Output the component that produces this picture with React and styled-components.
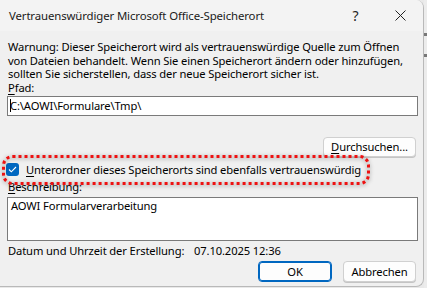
import React from "react";
import styled, { createGlobalStyle } from "styled-components";

const Global = createGlobalStyle`
  html, body { margin: 0; padding: 0; background: #e9e9e9; }
  body { font-family: "Noto Sans", "Open Sans", sans-serif; font-size: 11.2px; letter-spacing: -0.12px; color: #000; }
`;

const Page = styled.div`
  display: flex;
  width: 427px;
  height: 288px;
  overflow: hidden;
`;

const Dialog = styled.div`
  width: 423px;
  height: 286px;
  background: #f0f0f0;
  border-right: 1px solid #b9b9b9;
  border-bottom: 1px solid #b9b9b9;
  border-radius: 0 8px 8px 0;
  display: flex;
  flex-direction: column;
  overflow: hidden;
`;

const Side = styled.div`
  flex: 1;
  background: #ececec;
  display: flex;
  flex-direction: column;
  gap: 18px;
  padding-top: 33px;
`;

const Tick = styled.div`
  width: 3px;
  height: 3px;
  background: #777;
`;

const TitleBar = styled.div`
  height: 31px;
  display: flex;
  align-items: center;
  padding-left: 9px;
  background: #f3f3f3;
`;

const Title = styled.div`
  flex: 1;
  font-size: 11.4px;
  color: #1a1a1a;
`;

const TitleButton = styled.div`
  width: 45px;
  height: 31px;
  display: flex;
  align-items: center;
  justify-content: center;
  font-size: 14px;
  color: #222;
`;

const Body = styled.div`
  flex: 1;
  display: flex;
  flex-direction: column;
  padding: 9px 7px 0 8px;
`;

const Warning = styled.p`
  margin: 0;
  line-height: 13.5px;
  width: 408px;
`;

const Label = styled.div`
  line-height: 14px;
  margin-top: ${(p) => p.$mt || 0}px;
`;

const Input = styled.div`
  margin: 1px -2px 0 -1px;
  height: 18px;
  border: 1px solid #7a7a7a;
  background: #fff;
  display: flex;
  align-items: center;
  padding-left: 2px;
`;

const Caret = styled.span`
  width: 1px;
  height: 13px;
  background: #000;
  margin-right: -1px;
`;

const Area = styled.div`
  margin: 3px -2px 0 -1px;
  height: 41px;
  border: 1px solid #7a7a7a;
  background: #fff;
  padding: 1px 0 0 3px;
  line-height: 14px;
`;

const Row = styled.div`
  display: flex;
  justify-content: flex-end;
  gap: 11px;
  margin-top: ${(p) => p.$mt || 0}px;
`;

const Button = styled.div`
  width: ${(p) => p.$w}px;
  height: ${(p) => p.$h || 20}px;
  box-sizing: border-box;
  border: 1px solid ${(p) => (p.$primary ? "#0067c0" : "#d0d0d0")};
  box-shadow: ${(p) => (p.$primary ? "inset 0 0 0 1px #0067c0" : "0 1px 0 #c4c4c4")};
  border-radius: 4px;
  background: #fdfdfd;
  display: flex;
  align-items: center;
  justify-content: center;
`;

const CheckRow = styled.div`
  position: relative;
  display: flex;
  align-items: center;
  gap: 7px;
  margin-top: 6px;
  height: 14px;
  margin-left: -2px;
`;

const Box = styled.div`
  width: 13px;
  height: 13px;
  border-radius: 3px;
  background: #0067c0;
  display: flex;
  align-items: center;
  justify-content: center;
`;

const Annotation = styled.svg`
  position: absolute;
  left: -4px;
  top: -8px;
  overflow: visible;
  filter: drop-shadow(0 1px 2px rgba(0, 0, 0, 0.45));
`;

const DateRow = styled.div`
  display: flex;
  margin-top: 3px;
  line-height: 14px;
`;

const DateLabel = styled.span`
  width: 186px;
`;

const Key = styled.u`
  text-decoration: underline;
  text-underline-offset: 2px;
`;

export default function App() {
  return (
    <>
      <Global />
      <Page>
        <Dialog>
          <TitleBar>
            <Title>Vertrauenswürdiger Microsoft Office-Speicherort</Title>
            <TitleButton>?</TitleButton>
            <TitleButton>
              <svg width="11" height="11" viewBox="0 0 11 11">
                <path d="M0.5 0.5 L10.5 10.5 M10.5 0.5 L0.5 10.5" stroke="#222" strokeWidth="1" />
              </svg>
            </TitleButton>
          </TitleBar>
          <Body>
            <Warning>
              Warnung: Dieser Speicherort wird als vertrauenswürdige Quelle zum Öffnen von Dateien behandelt. Wenn Sie einen Speicherort ändern oder hinzufügen, sollten Sie sicherstellen, dass der neue Speicherort sicher ist.
            </Warning>
            <Label>
              <Key>P</Key>fad:
            </Label>
            <Input>
              <Caret />
              C:\AOWI\Formulare\Tmp\
            </Input>
            <Row $mt={21}>
              <Button $w={93}>
                <span>
                  <Key>D</Key>urchsuchen...
                </span>
              </Button>
            </Row>
            <CheckRow>
              <Box>
                <svg width="9" height="7" viewBox="0 0 9 7">
                  <path d="M1 3.5 L3.3 5.8 L8 1" stroke="#fff" strokeWidth="1.1" fill="none" />
                </svg>
              </Box>
              <span>
                <Key>U</Key>nterordner dieses Speicherorts sind ebenfalls vertrauenswürdig
              </span>
              <Annotation width="368" height="30" viewBox="0 0 368 30">
                <rect
                  x="1.5"
                  y="1.5"
                  width="365"
                  height="27"
                  rx="9"
                  fill="none"
                  stroke="#ee1111"
                  strokeWidth="3"
                  strokeDasharray="3 3"
                />
              </Annotation>
            </CheckRow>
            <Label $mt={3}>
              <Key>B</Key>eschreibung:
            </Label>
            <Area>AOWI Formularverarbeitung</Area>
            <DateRow>
              <DateLabel>Datum und Uhrzeit der Erstellung:</DateLabel>
              <span>07.10.2025 12:36</span>
            </DateRow>
            <Row $mt={3}>
              <Button $w={74} $h={21} $primary>OK</Button>
              <Button $w={73} $h={21}>Abbrechen</Button>
            </Row>
          </Body>
        </Dialog>
        <Side>
          <Tick />
          <Tick />
        </Side>
      </Page>
    </>
  );
}
